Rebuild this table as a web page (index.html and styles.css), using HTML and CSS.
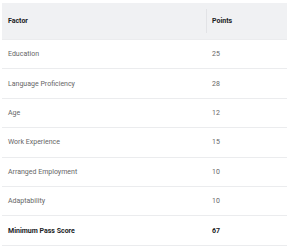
FILE: index.html
```html
<!DOCTYPE html>
<html>
<head>
<meta charset="utf-8">
<link rel="stylesheet" href="styles.css">
</head>
<body>
<table class="grid">
  <thead>
    <tr><th class="c1">Factor</th><th class="c2 sep">Points</th></tr>
  </thead>
  <tbody>
    <tr><td>Education</td><td class="c2">25</td></tr>
    <tr><td>Language Proficiency</td><td class="c2">28</td></tr>
    <tr><td>Age</td><td class="c2">12</td></tr>
    <tr><td>Work Experience</td><td class="c2">15</td></tr>
    <tr><td>Arranged Employment</td><td class="c2">10</td></tr>
    <tr><td>Adaptability</td><td class="c2">10</td></tr>
    <tr class="total"><td>Minimum Pass Score</td><td class="c2">67</td></tr>
  </tbody>
</table>
</body>
</html>
```
FILE: styles.css
```css
html, body { margin: 0; padding: 0; background: #fff; }
body { padding: 3px 2px 0 2px; font-family: Roboto, "Liberation Sans", sans-serif; }
.grid {
  width: 285px;
  border-collapse: collapse;
  table-layout: fixed;
  font-size: 7px;
}
.grid th, .grid td {
  text-align: left;
  padding: 0 6px;
  border-bottom: 1px solid #ebecee;
  white-space: nowrap;
}
.grid th {
  background: #f0f1f3;
  color: #202124;
  font-weight: 700;
  height: 36px;
}
.grid td {
  color: #666666;
  height: 28.4px;
}
.c1 { width: 192px; }
.sep { position: relative; }
.sep::before {
  content: "";
  position: absolute;
  left: 0;
  top: 6px;
  bottom: 6px;
  width: 1px;
  background: #e2e3e6;
}
.grid tr.total td { color: #202124; font-weight: 700; }
```
